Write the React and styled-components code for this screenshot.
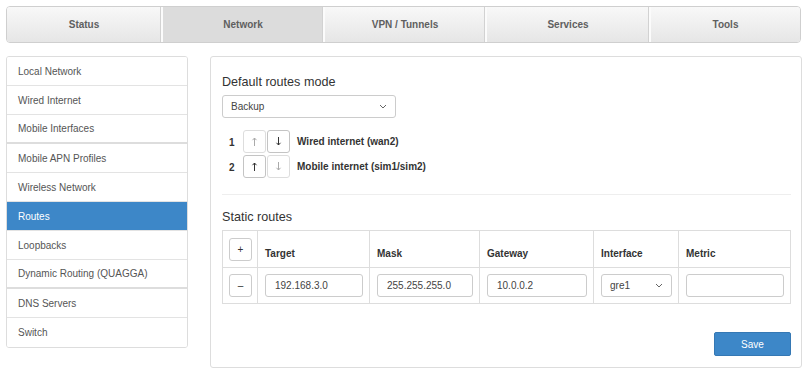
import styled, { createGlobalStyle } from "styled-components";

const GlobalStyle = createGlobalStyle`
  body {
    margin: 0;
    background: #fff;
    font-family: "Liberation Sans", Arial, Helvetica, sans-serif;
    color: #333;
  }
`;

const tabs = ["Status", "Network", "VPN / Tunnels", "Services", "Tools"];

const menu = [
  { label: "Local Network" },
  { label: "Wired Internet" },
  { label: "Mobile Interfaces", groupEnd: true },
  { label: "Mobile APN Profiles" },
  { label: "Wireless Network" },
  { label: "Routes", active: true },
  { label: "Loopbacks" },
  { label: "Dynamic Routing (QUAGGA)", groupEnd: true },
  { label: "DNS Servers" },
  { label: "Switch" },
];

const priorities = [
  { n: 1, label: "Wired internet (wan2)", up: false, down: true },
  { n: 2, label: "Mobile internet (sim1/sim2)", up: true, down: false },
];

const Chevron = () => (
  <svg width="8" height="5" viewBox="0 0 8 5">
    <path d="M1 1l3 3 3-3" fill="none" stroke="#666" strokeWidth="1" />
  </svg>
);

const Arrow = ({ down, color }) => (
  <svg
    width="7"
    height="11"
    viewBox="0 0 7 11"
    style={{ transform: down ? "rotate(180deg)" : "none" }}
  >
    <path d="M3.5 2v8M1.5 4.2l2-2.2 2 2.2" fill="none" stroke={color} strokeWidth="1" />
  </svg>
);

const App = () => {
  return (
    <Page>
      <GlobalStyle />
      <TabBar>
        {tabs.map((t, i) => (
          <Tab key={t} $active={t === "Network"} $last={i === tabs.length - 1}>
            {t}
          </Tab>
        ))}
      </TabBar>

      <Body>
        <SideMenu>
          {menu.map((m) => (
            <MenuItem key={m.label} $active={m.active} $groupEnd={m.groupEnd}>
              {m.label}
            </MenuItem>
          ))}
        </SideMenu>

        <Panel>
          <Heading>Default routes mode</Heading>
          <Select $width="174px">
            <span>Backup</span>
            <Chevron />
          </Select>

          <PriorityList>
            {priorities.map((p) => (
              <PriorityRow key={p.n}>
                <PriorityNum>{p.n}</PriorityNum>
                <ArrowButton $enabled={p.up}>
                  <Arrow color={p.up ? "#333" : "#aaa"} />
                </ArrowButton>
                <ArrowButton $enabled={p.down}>
                  <Arrow down color={p.down ? "#333" : "#aaa"} />
                </ArrowButton>
                <PriorityLabel>{p.label}</PriorityLabel>
              </PriorityRow>
            ))}
          </PriorityList>

          <Divider />

          <Heading>Static routes</Heading>
          <RoutesTable>
            <colgroup>
              <col style={{ width: 35 }} />
              <col style={{ width: 112 }} />
              <col style={{ width: 110 }} />
              <col style={{ width: 114 }} />
              <col style={{ width: 85 }} />
              <col style={{ width: 112 }} />
            </colgroup>
            <thead>
              <tr>
                <Th $button>
                  <SmallButton>+</SmallButton>
                </Th>
                <Th>Target</Th>
                <Th>Mask</Th>
                <Th>Gateway</Th>
                <Th>Interface</Th>
                <Th>Metric</Th>
              </tr>
            </thead>
            <tbody>
              <tr>
                <Td $button>
                  <SmallButton>–</SmallButton>
                </Td>
                <Td>
                  <Input>192.168.3.0</Input>
                </Td>
                <Td>
                  <Input>255.255.255.0</Input>
                </Td>
                <Td>
                  <Input>10.0.0.2</Input>
                </Td>
                <Td>
                  <Select>
                    <span>gre1</span>
                    <Chevron />
                  </Select>
                </Td>
                <Td>
                  <Input />
                </Td>
              </tr>
            </tbody>
          </RoutesTable>

          <Footer>
            <SaveButton>Save</SaveButton>
          </Footer>
        </Panel>
      </Body>
    </Page>
  );
};

export default App;

const Page = styled.div`
  padding: 6px 6px 5px 6px;
  width: 807px;
  box-sizing: border-box;
`;

const TabBar = styled.div`
  display: grid;
  grid-template-columns: 156px 162px 162px 164px 1fr;
  height: 37px;
  border: 1px solid #cfcfcf;
  border-radius: 4px;
  overflow: hidden;
  box-sizing: border-box;
  background: #fff;
`;

const Tab = styled.div`
  display: flex;
  align-items: center;
  justify-content: center;
  font-size: 10px;
  font-weight: bold;
  color: #5f5f5f;
  background: ${(p) =>
    p.$active ? "#dcdcdc" : "linear-gradient(#f8f8f8, #e6e6e6)"};
  border-right: ${(p) => (p.$last ? "none" : "2px solid #fbfbfb")};
  box-shadow: ${(p) => (p.$last ? "none" : "inset -1px 0 0 #d2d2d2")};
`;

const Body = styled.div`
  display: flex;
  align-items: flex-start;
  gap: 22px;
  margin-top: 13px;
`;

const SideMenu = styled.div`
  width: 182px;
  flex-shrink: 0;
  border: 1px solid #ddd;
  border-radius: 3px;
  box-sizing: border-box;
  overflow: hidden;
`;

const MenuItem = styled.div`
  height: 29px;
  box-sizing: border-box;
  display: flex;
  align-items: center;
  padding-left: 11px;
  font-size: 10px;
  color: ${(p) => (p.$active ? "#fff" : "#555")};
  background: ${(p) => (p.$active ? "#3d87c8" : "#fff")};
  border-bottom: ${(p) =>
    p.$groupEnd ? "2px solid #ddd" : "1px solid #e3e3e3"};

  &:last-child {
    border-bottom: none;
  }
`;

const Panel = styled.div`
  flex: 1;
  height: 312px;
  box-sizing: border-box;
  border: 1px solid #ddd;
  border-radius: 3px;
  padding: 15px 10px 11px 11px;
`;

const Heading = styled.div`
  font-size: 12.6px;
  line-height: 20px;
  color: #333;
  margin-bottom: 3px;
`;

const Select = styled.div`
  width: ${(p) => p.$width || "100%"};
  height: 23px;
  box-sizing: border-box;
  border: 1px solid #ccc;
  border-radius: 3px;
  display: flex;
  align-items: center;
  justify-content: space-between;
  padding: 0 8px 0 8px;
  font-size: 10px;
  color: #444;
  background: #fff;
`;

const PriorityList = styled.div`
  display: flex;
  flex-direction: column;
  gap: 2px;
  margin-top: 12px;
`;

const PriorityRow = styled.div`
  display: flex;
  align-items: center;
  padding-left: 7px;
`;

const PriorityNum = styled.span`
  width: 14px;
  font-size: 10px;
  font-weight: bold;
  color: #333;
  margin-top: 2px;
`;

const ArrowButton = styled.div`
  width: 23px;
  height: 23px;
  box-sizing: border-box;
  border: 1px solid ${(p) => (p.$enabled ? "#c4c4c4" : "#ddd")};
  border-radius: 3px;
  margin-right: 1px;
  display: flex;
  align-items: center;
  justify-content: center;
`;

const PriorityLabel = styled.span`
  margin-left: 6px;
  margin-top: -1px;
  font-size: 10px;
  font-weight: bold;
  color: #333;
`;

const Divider = styled.div`
  height: 1px;
  background: #eee;
  margin: 16px 0 12px;
`;

const RoutesTable = styled.table`
  width: 568px;
  border-collapse: collapse;
  table-layout: fixed;
`;

const Th = styled.th`
  height: 37px;
  box-sizing: border-box;
  border: 1px solid #ddd;
  text-align: left;
  vertical-align: ${(p) => (p.$button ? "middle" : "bottom")};
  padding: ${(p) => (p.$button ? "0 0 0 6px" : "0 6px 8px 7px")};
  font-size: 10px;
  font-weight: bold;
  color: #333;
`;

const Td = styled.td`
  height: 36px;
  box-sizing: border-box;
  border: 1px solid #ddd;
  vertical-align: middle;
  padding: ${(p) => (p.$button ? "0 0 0 6px" : "0 6px 0 7px")};
`;

const SmallButton = styled.div`
  width: 23px;
  height: 23px;
  box-sizing: border-box;
  border: 1px solid #ccc;
  border-radius: 3px;
  display: flex;
  align-items: center;
  justify-content: center;
  font-size: 10px;
  font-weight: normal;
  color: #333;
`;

const Input = styled.div`
  height: 23px;
  box-sizing: border-box;
  border: 1px solid #ccc;
  border-radius: 3px;
  display: flex;
  align-items: center;
  padding-left: 9px;
  font-size: 10px;
  color: #444;
`;

const Footer = styled.div`
  display: flex;
  justify-content: flex-end;
  margin-top: 28px;
`;

const SaveButton = styled.div`
  width: 77px;
  height: 24px;
  box-sizing: border-box;
  background: #3d87c8;
  border: 1px solid #3578b4;
  border-radius: 2px;
  display: flex;
  align-items: center;
  justify-content: center;
  font-size: 10px;
  color: #fff;
`;
